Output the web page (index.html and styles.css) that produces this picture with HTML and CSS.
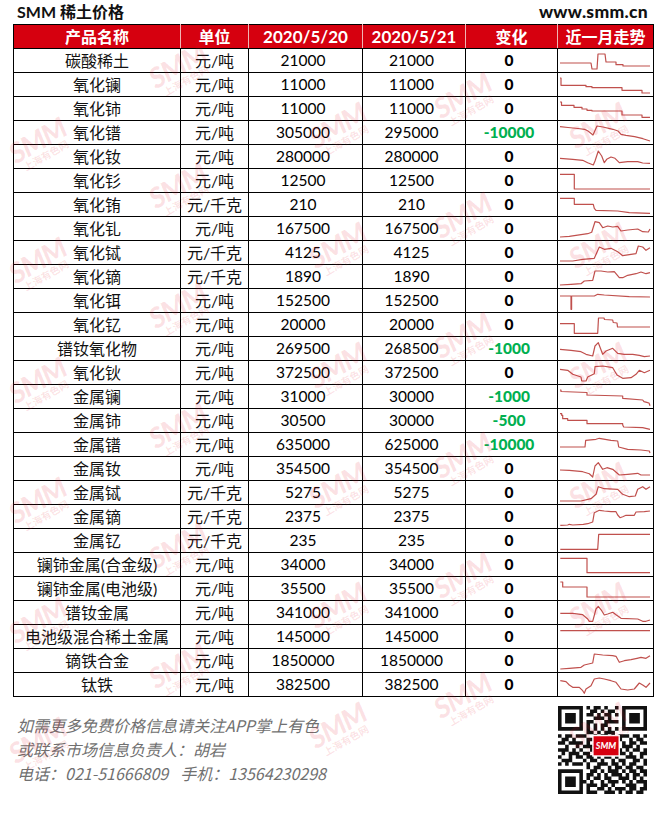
FILE: index.html
```html
<!DOCTYPE html>
<html lang="zh-CN">
<head>
<meta charset="utf-8">
<title>SMM 稀土价格</title>
<link rel="stylesheet" href="styles.css">
</head>
<body>
<div class="page">
  <div class="titlebar">
    <div class="title">SMM 稀土价格</div>
    <div class="site">www.smm.cn</div>
  </div>
  <table class="prices">
    <colgroup>
      <col class="c-name"><col class="c-unit"><col class="c-d1"><col class="c-d2"><col class="c-chg"><col class="c-trend">
    </colgroup>
    <thead>
      <tr><th class="cjk">产品名称</th><th class="cjk">单位</th><th>2020/5/20</th><th>2020/5/21</th><th class="cjk">变化</th><th class="cjk">近一月走势</th></tr>
    </thead>
    <tbody>
      <tr><td class="name">碳酸稀土</td><td class="unit">元/吨</td><td class="num">21000</td><td class="num">21000</td><td class="chg">0</td><td class="trend"><svg viewBox="0 0 95 23" width="95" height="23"><polyline points="2,14 33,14 34,20 39,20 40,5 47,5 48,13 58,13 58,15.7 65,15.7 65,17 92,17"/></svg></td></tr>
      <tr><td class="name">氧化镧</td><td class="unit">元/吨</td><td class="num">11000</td><td class="num">11000</td><td class="chg">0</td><td class="trend"><svg viewBox="0 0 95 23" width="95" height="23"><polyline points="2,5 3,5 3,12.3 28,12.3 28,13.7 34,13.7 34,14.7 64,14.7 64,17.3 84,17.3 84,20 92,20"/></svg></td></tr>
      <tr><td class="name">氧化铈</td><td class="unit">元/吨</td><td class="num">11000</td><td class="num">11000</td><td class="chg">0</td><td class="trend"><svg viewBox="0 0 95 23" width="95" height="23"><polyline points="2,5 3.5,5 3.5,8.3 16,8.3 16,10.3 24,10.3 24,12 29,12 29,13.3 34,13.3 34,14 64,14 64,18 84,18 84,20.3 92,20.3"/></svg></td></tr>
      <tr><td class="name">氧化镨</td><td class="unit">元/吨</td><td class="num">305000</td><td class="num">295000</td><td class="chg down">-10000</td><td class="trend"><svg viewBox="0 0 95 23" width="95" height="23"><polyline points="2,5.7 10,6.5 20,7.5 26.6,8.3 30,10 35,14 39,5 45,6 55,8.3 60,10 63,13.3 68,14.3 76.6,15.7 85,17.7 92,20"/></svg></td></tr>
      <tr><td class="name">氧化钕</td><td class="unit">元/吨</td><td class="num">280000</td><td class="num">280000</td><td class="chg">0</td><td class="trend"><svg viewBox="0 0 95 23" width="95" height="23"><polyline points="2,13.3 14.7,14.3 24.7,15.3 29.7,17.7 35.3,20 37,16 40.3,6 43.7,11 46.3,17.7 48.7,14.3 53,12 57,13.3 61.3,17.7 69.7,16.7 79.7,16.7 84.7,18 92,18.3"/></svg></td></tr>
      <tr><td class="name">氧化钐</td><td class="unit">元/吨</td><td class="num">12500</td><td class="num">12500</td><td class="chg">0</td><td class="trend"><svg viewBox="0 0 95 23" width="95" height="23"><polyline points="2,5.3 16.3,5.3 16.3,20 92,20"/></svg></td></tr>
      <tr><td class="name">氧化铕</td><td class="unit">元/千克</td><td class="num">210</td><td class="num">210</td><td class="chg">0</td><td class="trend"><svg viewBox="0 0 95 23" width="95" height="23"><polyline points="2,5.3 16.3,5.3 16.3,11.3 35.3,11.3 36.3,15.3 38,17.3 59.7,18 71.3,19.7 92,20.3"/></svg></td></tr>
      <tr><td class="name">氧化钆</td><td class="unit">元/吨</td><td class="num">167500</td><td class="num">167500</td><td class="chg">0</td><td class="trend"><svg viewBox="0 0 95 23" width="95" height="23"><polyline points="2,20 11.3,19.3 29.7,16.7 33.7,15.3 37,4.7 41.3,5.7 44.7,10.7 49.7,9 54.7,10 59.7,9.3 63,14 69.7,13 79.7,12 84.7,14.7 90.3,15 92,12"/></svg></td></tr>
      <tr><td class="name">氧化铽</td><td class="unit">元/千克</td><td class="num">4125</td><td class="num">4125</td><td class="chg">0</td><td class="trend"><svg viewBox="0 0 95 23" width="95" height="23"><polyline points="2,20 14.7,20 24.7,18.3 36.3,17.3 41.3,6 46.3,8.3 53,7.3 59.7,10.7 64.7,14.7 73,13.3 78,12.7 80.3,5 84.7,6 88,9.3 92,6.7"/></svg></td></tr>
      <tr><td class="name">氧化镝</td><td class="unit">元/千克</td><td class="num">1890</td><td class="num">1890</td><td class="chg">0</td><td class="trend"><svg viewBox="0 0 95 23" width="95" height="23"><polyline points="2,20 13,19.3 23,18.7 26.3,16 34.7,15.3 37,6 43,6 49.7,7 56.3,6.7 61.3,12.7 64.7,12.7 69.7,10.3 78,8.7 83,7 88,8.7 92,7.7"/></svg></td></tr>
      <tr><td class="name">氧化铒</td><td class="unit">元/吨</td><td class="num">152500</td><td class="num">152500</td><td class="chg">0</td><td class="trend"><svg viewBox="0 0 95 23" width="95" height="23"><polyline points="2,7 13,7 13,20.3 13.6,20.3 13.6,7 36.3,7 39.7,5.3 46.3,6 71.3,7.7 92,8"/></svg></td></tr>
      <tr><td class="name">氧化钇</td><td class="unit">元/吨</td><td class="num">20000</td><td class="num">20000</td><td class="chg">0</td><td class="trend"><svg viewBox="0 0 95 23" width="95" height="23"><polyline points="2,10.7 16.3,10.7 16.3,20.3 39.7,20.3 40.5,5 46,5 46.5,6.5 54.7,7 55.2,9.5 59,10 59.5,14 92,14"/></svg></td></tr>
      <tr><td class="name">镨钕氧化物</td><td class="unit">元/吨</td><td class="num">269500</td><td class="num">268500</td><td class="chg down">-1000</td><td class="trend"><svg viewBox="0 0 95 23" width="95" height="23"><polyline points="2,12.3 13,13.3 23,14.7 28,17.3 34.7,19 37,9 40.3,5.7 44.7,17.3 48,14 54.7,11.3 59.7,16.3 66.3,17.3 74.7,17.3 81.3,18.3 86.3,19.7 92,19"/></svg></td></tr>
      <tr><td class="name">氧化钬</td><td class="unit">元/吨</td><td class="num">372500</td><td class="num">372500</td><td class="chg">0</td><td class="trend"><svg viewBox="0 0 95 23" width="95" height="23"><polyline points="2,8.3 9.7,9.3 14.7,13.3 23,16 23.7,20 28,20 29.7,16 36.3,12.7 37,5.7 44.7,5 54.7,6.7 59,14 64.7,17.3 73,16.7 78,13.3 81.3,9.3 86.3,11.7 92,9.3"/></svg></td></tr>
      <tr><td class="name">金属镧</td><td class="unit">元/吨</td><td class="num">31000</td><td class="num">30000</td><td class="chg down">-1000</td><td class="trend"><svg viewBox="0 0 95 23" width="95" height="23"><polyline points="2,5 3,5 3,6.5 29,7.5 29,10 64.7,11 64.7,13.3 84.7,15 86,16.7 89.7,17.7 91,18 92,20.7"/></svg></td></tr>
      <tr><td class="name">金属铈</td><td class="unit">元/吨</td><td class="num">30500</td><td class="num">30000</td><td class="chg down">-500</td><td class="trend"><svg viewBox="0 0 95 23" width="95" height="23"><polyline points="2,4.7 3.7,4.7 3.7,6.3 4.7,6.3 4.7,9.7 9.7,9.7 9.7,11.3 29,11.3 29,14.7 64.7,14.7 64.7,16 65.7,18 84.7,18.7 92,20.3"/></svg></td></tr>
      <tr><td class="name">金属镨</td><td class="unit">元/吨</td><td class="num">635000</td><td class="num">625000</td><td class="chg down">-10000</td><td class="trend"><svg viewBox="0 0 95 23" width="95" height="23"><polyline points="2,14 27,14 27.7,7.3 38,6.3 41.3,5.3 53,7.3 59.7,8 60.7,14 69.7,16.3 83,17 91.3,18 92,20"/></svg></td></tr>
      <tr><td class="name">金属钕</td><td class="unit">元/吨</td><td class="num">354500</td><td class="num">354500</td><td class="chg">0</td><td class="trend"><svg viewBox="0 0 95 23" width="95" height="23"><polyline points="2,13 11.3,13.3 24.7,14.7 31.3,16.7 34.7,20 37,9 40.3,5.7 44.7,12.3 49,10.7 54.7,12.3 61.3,18 69.7,17.3 79.7,16.3 83,18 92,18"/></svg></td></tr>
      <tr><td class="name">金属铽</td><td class="unit">元/千克</td><td class="num">5275</td><td class="num">5275</td><td class="chg">0</td><td class="trend"><svg viewBox="0 0 95 23" width="95" height="23"><polyline points="2,20 23,20 33,17.7 38,13.3 40.3,5.7 46.3,7.7 59.7,8.3 64.7,13.3 71.3,15.7 77.3,15 79.7,8.3 84.7,5.7 88,8.3 92,5.7"/></svg></td></tr>
      <tr><td class="name">金属镝</td><td class="unit">元/千克</td><td class="num">2375</td><td class="num">2375</td><td class="chg">0</td><td class="trend"><svg viewBox="0 0 95 23" width="95" height="23"><polyline points="2.3,20.3 9.7,20 11.3,19.3 14.7,20 25.3,19.3 29.7,18.7 34.7,17 36.3,7.7 41.3,5.3 46.3,6 53,6.7 58,6.7 59.7,10 62,12.7 64.7,11.7 68,10.3 76.3,10.3 78,7 86.3,6.7 92,6"/></svg></td></tr>
      <tr><td class="name">金属钇</td><td class="unit">元/千克</td><td class="num">235</td><td class="num">235</td><td class="chg">0</td><td class="trend"><svg viewBox="0 0 95 23" width="95" height="23"><polyline points="2.3,20.3 39.7,20.3 40.7,5.3 92,5.3"/></svg></td></tr>
      <tr><td class="name">镧铈金属(合金级)</td><td class="unit">元/吨</td><td class="num">34000</td><td class="num">34000</td><td class="chg">0</td><td class="trend"><svg viewBox="0 0 95 23" width="95" height="23"><polyline points="2.3,5.3 29,5.3 29,19.7 92,19.7"/></svg></td></tr>
      <tr><td class="name">镧铈金属(电池级)</td><td class="unit">元/吨</td><td class="num">35500</td><td class="num">35500</td><td class="chg">0</td><td class="trend"><svg viewBox="0 0 95 23" width="95" height="23"><polyline points="2.3,5 4.7,5 4.7,10 29,10 29,20 92,20"/></svg></td></tr>
      <tr><td class="name">镨钕金属</td><td class="unit">元/吨</td><td class="num">341000</td><td class="num">341000</td><td class="chg">0</td><td class="trend"><svg viewBox="0 0 95 23" width="95" height="23"><polyline points="2.3,12.3 14.7,12.3 24.7,13.7 29.7,18 31.3,20.3 34.7,20.3 38,8 40.3,5.3 43.7,9.7 46.3,14 49.7,13 54.7,11.3 58,13.7 63,17.3 79.7,18 84.7,20.3 88,20.3 92,19"/></svg></td></tr>
      <tr><td class="name">电池级混合稀土金属</td><td class="unit">元/吨</td><td class="num">145000</td><td class="num">145000</td><td class="chg">0</td><td class="trend"><svg viewBox="0 0 95 23" width="95" height="23"><polyline points="2.3,5.7 92,5.7"/></svg></td></tr>
      <tr><td class="name">镝铁合金</td><td class="unit">元/吨</td><td class="num">1850000</td><td class="num">1850000</td><td class="chg">0</td><td class="trend"><svg viewBox="0 0 95 23" width="95" height="23"><polyline points="2.3,20 11.3,19.3 23,18.3 26.3,16 34.7,14 36.3,5 44.7,6 54.7,6.7 58,7.3 61.3,13.3 66.3,11.7 73,10.7 79,9.3 83,8.3 88,9.3 92,6.7"/></svg></td></tr>
      <tr><td class="name">钛铁</td><td class="unit">元/吨</td><td class="num">382500</td><td class="num">382500</td><td class="chg">0</td><td class="trend"><svg viewBox="0 0 95 23" width="95" height="23"><polyline points="2.3,7.7 8,8.7 11.3,12 14.7,14.3 21.3,14.3 24.7,17.7 26.3,20.3 28,16 33,12.7 36.3,6 41.3,5 46.3,6 53,7.7 58,9.3 63,16 69.7,17 76.3,16 81.3,10 84.7,12 88,14.3 92,10"/></svg></td></tr>
    </tbody>
  </table>
  <div class="footer">
    <div class="notes">
      <div>如需更多免费价格信息请关注APP掌上有色</div>
      <div>或联系市场信息负责人：胡岩</div>
      <div>电话：021-51666809<span class="mobile">手机：13564230298</span></div>
    </div>
    <svg class="qr" viewBox="0 0 25 25" width="89" height="88" preserveAspectRatio="none">
      <path class="qr-dots" d="M0 0h7v1h-7zM8 0h1v1h-1zM10 0h2v1h-2zM13 0h1v1h-1zM16 0h1v1h-1zM18 0h7v1h-7z
M0 1h1v1h-1zM6 1h1v1h-1zM9 1h2v1h-2zM12 1h1v1h-1zM14 1h2v1h-2zM18 1h1v1h-1zM24 1h1v1h-1z
M0 2h1v1h-1zM2 2h3v1h-3zM6 2h1v1h-1zM8 2h2v1h-2zM11 2h1v1h-1zM13 2h2v1h-2zM16 2h1v1h-1zM18 2h1v1h-1zM20 2h3v1h-3zM24 2h1v1h-1z
M0 3h1v1h-1zM2 3h3v1h-3zM6 3h1v1h-1zM10 3h3v1h-3zM14 3h1v1h-1zM18 3h1v1h-1zM20 3h3v1h-3zM24 3h1v1h-1z
M0 4h1v1h-1zM2 4h3v1h-3zM6 4h1v1h-1zM8 4h2v1h-2zM13 4h4v1h-4zM18 4h1v1h-1zM20 4h3v1h-3zM24 4h1v1h-1z
M0 5h1v1h-1zM6 5h1v1h-1zM8 5h1v1h-1zM10 5h1v1h-1zM12 5h2v1h-2zM18 5h1v1h-1zM24 5h1v1h-1z
M0 6h7v1h-7zM8 6h1v1h-1zM10 6h1v1h-1zM12 6h1v1h-1zM14 6h1v1h-1zM16 6h1v1h-1zM18 6h7v1h-7z
M8 7h2v1h-2zM11 7h1v1h-1zM13 7h3v1h-3z
M0 8h1v1h-1zM2 8h2v1h-2zM5 8h3v1h-3zM10 8h1v1h-1zM12 8h2v1h-2zM15 8h1v1h-1zM17 8h3v1h-3zM21 8h2v1h-2zM24 8h1v1h-1z
M1 9h2v1h-2zM4 9h1v1h-1zM8 9h2v1h-2zM11 9h2v1h-2zM14 9h1v1h-1zM16 9h2v1h-2zM20 9h1v1h-1zM22 9h2v1h-2z
M0 10h2v1h-2zM3 10h4v1h-4zM8 10h1v1h-1zM11 10h1v1h-1zM13 10h3v1h-3zM18 10h1v1h-1zM20 10h2v1h-2zM23 10h2v1h-2z
M2 11h1v1h-1zM5 11h1v1h-1zM7 11h4v1h-4zM12 11h1v1h-1zM15 11h2v1h-2zM18 11h3v1h-3zM22 11h1v1h-1z
M0 12h3v1h-3zM4 12h1v1h-1zM6 12h1v1h-1zM9 12h1v1h-1zM11 12h3v1h-3zM16 12h2v1h-2zM19 12h1v1h-1zM21 12h2v1h-2zM24 12h1v1h-1z
M1 13h1v1h-1zM3 13h3v1h-3zM7 13h2v1h-2zM10 13h1v1h-1zM14 13h2v1h-2zM17 13h2v1h-2zM20 13h1v1h-1zM23 13h2v1h-2z
M0 14h1v1h-1zM3 14h1v1h-1zM5 14h2v1h-2zM8 14h2v1h-2zM11 14h1v1h-1zM13 14h2v1h-2zM16 14h1v1h-1zM19 14h3v1h-3zM23 14h1v1h-1z
M1 15h3v1h-3zM7 15h1v1h-1zM9 15h2v1h-2zM12 15h1v1h-1zM15 15h1v1h-1zM17 15h2v1h-2zM21 15h2v1h-2zM24 15h1v1h-1z
M0 16h1v1h-1zM2 16h1v1h-1zM4 16h3v1h-3zM8 16h1v1h-1zM11 16h3v1h-3zM15 16h2v1h-2zM18 16h1v1h-1zM20 16h2v1h-2zM24 16h1v1h-1z
M8 17h1v1h-1zM10 17h2v1h-2zM14 17h1v1h-1zM16 17h2v1h-2zM19 17h2v1h-2zM22 17h2v1h-2z
M0 18h7v1h-7zM9 18h2v1h-2zM12 18h1v1h-1zM14 18h3v1h-3zM18 18h1v1h-1zM20 18h2v1h-2zM23 18h2v1h-2z
M0 19h1v1h-1zM6 19h1v1h-1zM8 19h2v1h-2zM11 19h1v1h-1zM13 19h1v1h-1zM15 19h3v1h-3zM19 19h1v1h-1zM21 19h2v1h-2zM24 19h1v1h-1z
M0 20h1v1h-1zM2 20h3v1h-3zM6 20h1v1h-1zM8 20h1v1h-1zM10 20h2v1h-2zM13 20h2v1h-2zM17 20h3v1h-3zM21 20h1v1h-1zM23 20h1v1h-1z
M0 21h1v1h-1zM2 21h3v1h-3zM6 21h2v1h-2zM9 21h1v1h-1zM12 21h1v1h-1zM14 21h3v1h-3zM18 21h1v1h-1zM20 21h1v1h-1zM22 21h3v1h-3z
M0 22h1v1h-1zM2 22h3v1h-3zM6 22h1v1h-1zM8 22h3v1h-3zM12 22h2v1h-2zM15 22h1v1h-1zM19 22h3v1h-3zM24 22h1v1h-1z
M0 23h1v1h-1zM6 23h1v1h-1zM8 23h1v1h-1zM11 23h2v1h-2zM14 23h1v1h-1zM16 23h3v1h-3zM20 23h2v1h-2zM23 23h2v1h-2z
M0 24h7v1h-7zM8 24h3v1h-3zM13 24h3v1h-3zM17 24h1v1h-1zM19 24h2v1h-2zM22 24h2v1h-2z"/>
      <rect class="qr-pad" x="9.6" y="8.2" width="7.8" height="6.2"/>
      <rect class="qr-logo" x="10" y="8.6" width="7" height="5.4"/>
      <text class="qr-text" x="13.5" y="12.2" text-anchor="middle">SMM</text>
    </svg>
  </div>
</div>
<div class="watermarks" aria-hidden="true">
  <div class="wmcol col1">
    <div class="wm"><b>SMM</b><i>上海有色网</i></div><div class="wm"><b>SMM</b><i>上海有色网</i></div><div class="wm"><b>SMM</b><i>上海有色网</i></div><div class="wm"><b>SMM</b><i>上海有色网</i></div><div class="wm"><b>SMM</b><i>上海有色网</i></div><div class="wm"><b>SMM</b><i>上海有色网</i></div>
  </div>
  <div class="wmcol col2">
    <div class="wm"><b>SMM</b><i>上海有色网</i></div><div class="wm"><b>SMM</b><i>上海有色网</i></div><div class="wm"><b>SMM</b><i>上海有色网</i></div><div class="wm"><b>SMM</b><i>上海有色网</i></div><div class="wm"><b>SMM</b><i>上海有色网</i></div><div class="wm"><b>SMM</b><i>上海有色网</i></div>
  </div>
  <div class="wmcol col3">
    <div class="wm"><b>SMM</b><i>上海有色网</i></div><div class="wm"><b>SMM</b><i>上海有色网</i></div><div class="wm"><b>SMM</b><i>上海有色网</i></div><div class="wm"><b>SMM</b><i>上海有色网</i></div><div class="wm"><b>SMM</b><i>上海有色网</i></div><div class="wm"><b>SMM</b><i>上海有色网</i></div>
  </div>
  <div class="wmcol col4">
    <div class="wm"><b>SMM</b><i>上海有色网</i></div><div class="wm"><b>SMM</b><i>上海有色网</i></div><div class="wm"><b>SMM</b><i>上海有色网</i></div><div class="wm"><b>SMM</b><i>上海有色网</i></div><div class="wm"><b>SMM</b><i>上海有色网</i></div><div class="wm"><b>SMM</b><i>上海有色网</i></div>
  </div>
  <div class="wmcol col5">
    <div class="wm"><b>SMM</b><i>上海有色网</i></div><div class="wm"><b>SMM</b><i>上海有色网</i></div><div class="wm"><b>SMM</b><i>上海有色网</i></div><div class="wm"><b>SMM</b><i>上海有色网</i></div><div class="wm"><b>SMM</b><i>上海有色网</i></div><div class="wm"><b>SMM</b><i>上海有色网</i></div>
  </div>
</div>
</body>
</html>
```

FILE: styles.css
```css
html, body {
  margin: 0;
  padding: 0;
  background: #fff;
}
body {
  width: 661px;
  height: 813px;
  position: relative;
  overflow: hidden;
  font-family: "Lato", "Noto Sans CJK SC", sans-serif;
  color: #000;
}
.page {
  padding: 0 9px 0 13px;
}
.titlebar {
  display: flex;
  justify-content: space-between;
  align-items: center;
  height: 24px;
  padding: 0 4px 0 4px;
}
.title {
  font-family: "Lato", "Noto Sans CJK SC", sans-serif;
  font-weight: 700;
  font-size: 16px;
  line-height: 24px;
  color: #111;
}
.site {
  font-family: "Lato", sans-serif;
  font-weight: 900;
  font-size: 17.5px;
  line-height: 24px;
  letter-spacing: 0.3px;
  color: #111;
}
.prices {
  border-collapse: collapse;
  table-layout: fixed;
  width: 640px;
}
.c-name { width: 167px; }
.c-unit { width: 68px; }
.c-d1 { width: 114px; }
.c-d2 { width: 103px; }
.c-chg { width: 92px; }
.c-trend { width: 96px; }
.prices th {
  background: #d6000f;
  color: #fff;
  font-weight: 700;
  font-size: 17px;
  height: 23px;
  line-height: 23px;
  padding: 0;
  border: 1px solid #000;
  border-left-color: #f0b4b4;
  border-right-color: #f0b4b4;
  white-space: nowrap;
}
.prices th:first-child { border-left-color: #000; }
.prices th:last-child { border-right-color: #000; }
.prices th.cjk {
  font-family: "Noto Sans CJK SC", sans-serif;
  font-size: 16px;
}
.prices td {
  border: 1px solid #000;
  height: 23px;
  line-height: 23px;
  padding: 0;
  text-align: center;
  font-size: 15.5px;
  white-space: nowrap;
  overflow: hidden;
}
.prices td.name,
.prices td.unit {
  font-size: 16px;
  color: #111;
}
.prices td.num {
  padding-right: 5px;
}
.prices td.chg {
  font-weight: 900;
  padding-right: 5px;
}
.prices td.down {
  color: #00b050;
}
.prices td.trend svg {
  display: block;
}
.prices td.trend polyline {
  fill: none;
  stroke: #c0504d;
  stroke-width: 1.2;
  stroke-linejoin: round;
}
.footer {
  display: flex;
  justify-content: space-between;
  align-items: flex-start;
  padding: 9px 5px 0 4px;
}
.notes {
  margin-top: 7px;
  font-family: "Noto Sans CJK SC", sans-serif;
  font-style: italic;
  font-size: 16px;
  line-height: 24px;
  color: #707070;
}
.mobile {
  margin-left: 12px;
}
.qr {
  display: block;
}
.qr-dots { fill: #111; }
.qr-pad { fill: #fff; }
.qr-logo { fill: #d7000f; }
.qr-text {
  fill: #fff;
  font-family: "Lato", sans-serif;
  font-weight: 900;
  font-style: italic;
  font-size: 2.5px;
}
.watermarks {
  position: absolute;
  left: 0;
  top: 0;
  width: 661px;
  height: 813px;
  pointer-events: none;
  overflow: hidden;
}
.wmcol {
  position: absolute;
  display: flex;
  flex-direction: column;
  gap: 80px;
}
.col1 { left: 8px; top: 125px; }
.col2 { left: 148px; top: 50px; }
.col3 { left: 308px; top: 110px; }
.col4 { left: 433px; top: 80px; }
.col5 { left: 568px; top: 110px; }
.wm {
  width: 64px;
  height: 40px;
  display: flex;
  flex-direction: column;
  align-items: center;
  justify-content: center;
  transform: rotate(-30deg);
  color: rgba(225, 20, 40, 0.13);
}
.wm b {
  font-family: "Lato", sans-serif;
  font-weight: 900;
  font-style: italic;
  font-size: 28px;
  line-height: 24px;
  letter-spacing: -1px;
}
.wm i {
  font-family: "Noto Sans CJK SC", sans-serif;
  font-style: normal;
  font-weight: 700;
  font-size: 10px;
  line-height: 12px;
}
```
